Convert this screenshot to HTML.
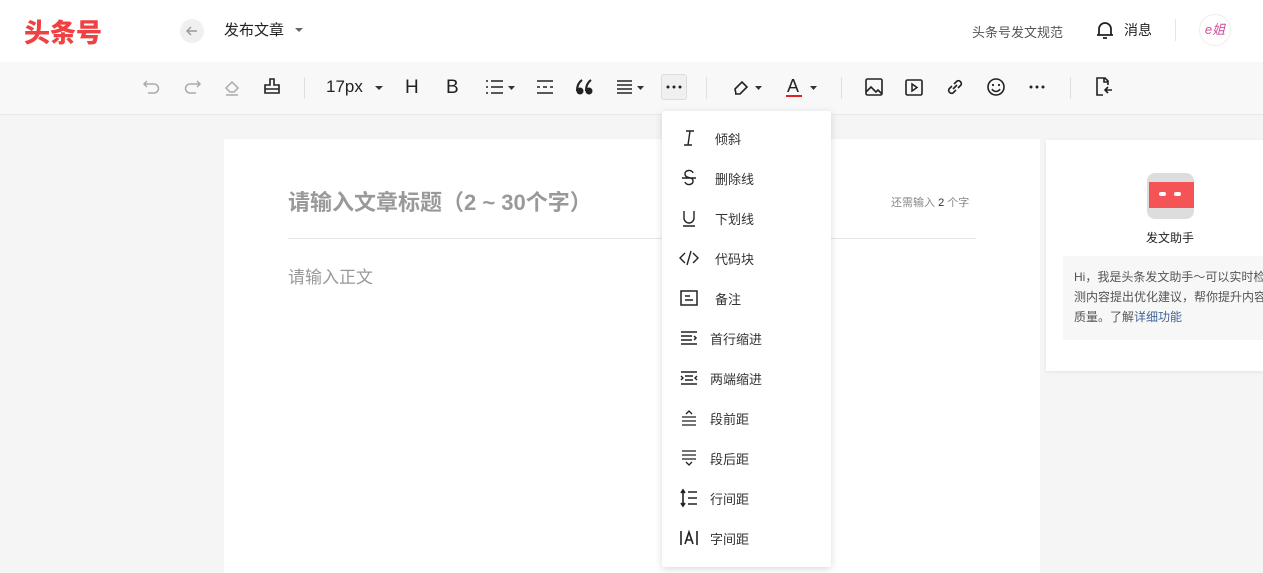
<!DOCTYPE html>
<html><head><meta charset="utf-8"><style>
*{margin:0;padding:0;box-sizing:border-box}
body{width:1263px;height:573px;overflow:hidden;background:#f5f5f5;font-family:"Liberation Sans","Noto Sans CJK SC",sans-serif;position:relative;color:#222}
.hdr{position:absolute;left:0;top:0;width:1263px;height:62px;background:#fff}
.logo{position:absolute;left:24px;top:13px;font-size:26px;font-weight:900;color:#f04142}
.back{position:absolute;left:180px;top:19px;width:24px;height:24px;border-radius:50%;background:#f0f0f0}
.t{position:absolute;font-size:15px}
.tb{position:absolute;left:0;top:62px;width:1263px;height:53px;background:#f8f8f8;border-bottom:1px solid #e8e8e8}
.ic{position:absolute;top:14px}
.sep{position:absolute;top:15px;width:1px;height:22px;background:#e0e0e0}
.paper{position:absolute;left:224px;top:139px;width:816px;height:434px;background:#fff}
.card{position:absolute;left:1046px;top:140px;width:217px;height:231px;background:#fff;box-shadow:0 1px 4px rgba(0,0,0,.08)}
.menu{position:absolute;left:662px;top:111px;width:169px;height:456px;background:#fff;box-shadow:0 2px 8px rgba(0,0,0,.15);border-radius:2px}
.mi{position:absolute;left:0;width:169px;height:40px;font-size:13px;color:#333}
.mi span{position:absolute;top:10px}
.mi svg{position:absolute;left:17px;top:9px}
</style></head><body>
<div class="hdr">
<div class="logo">头条号</div>
<div class="back"><svg width="24" height="24" viewBox="0 0 24 24"><path d="M17 12H7M11 8l-4 4 4 4" stroke="#999" stroke-width="1.4" fill="none"/></svg></div>
<div class="t" style="left:224px;top:19px;color:#222">发布文章</div>
<svg style="position:absolute;left:295px;top:27px" width="8" height="6"><path d="M0 1h8L4 5z" fill="#666"/></svg>
<div class="t" style="left:972px;top:22px;font-size:13px;color:#555">头条号发文规范</div>
<svg style="position:absolute;left:1094px;top:19px" width="22" height="22" viewBox="0 0 22 22"><path d="M5 16V10a6 6 0 0 1 12 0v6M3 16h16M9 19h4" stroke="#222" stroke-width="1.8" fill="none"/></svg>
<div class="t" style="left:1124px;top:20px;font-size:14px">消息</div>
<div style="position:absolute;left:1175px;top:19px;width:1px;height:22px;background:#e5e5e5"></div>
<div style="position:absolute;left:1199px;top:14px;width:32px;height:32px;border-radius:50%;border:1px solid #eee;background:#fff;color:#d04c9c;font-size:13px;text-align:center;line-height:30px;font-style:italic">e姐</div>
</div>
<div class="tb">
<svg class="ic" style="left:141px" width="22" height="22" viewBox="0 0 22 22"><path d="M6 5L3 8l3 3M3 8h10a4 4 0 0 1 0 9H7" stroke="#aaa" stroke-width="1.5" fill="none"/></svg>
<svg class="ic" style="left:181px" width="22" height="22" viewBox="0 0 22 22"><path d="M16 5l3 3-3 3M19 8H9a4 4 0 0 0 0 9h6" stroke="#aaa" stroke-width="1.5" fill="none"/></svg>
<svg class="ic" style="left:221px" width="22" height="22" viewBox="0 0 22 22"><path d="M5 12l6-6 6 6-4 4H9zM5 19h12" stroke="#aaa" stroke-width="1.5" fill="none"/></svg>
<svg class="ic" style="left:261px" width="22" height="22" viewBox="0 0 22 22"><path d="M9 3h4v6h5v8H4V9h5zM4 13h14" stroke="#222" stroke-width="1.6" fill="none"/></svg>
<div class="sep" style="left:304px"></div>
<div class="t" style="left:326px;top:15px;font-size:17px">17px</div>
<svg style="position:absolute;left:375px;top:23px" width="8" height="6"><path d="M0 1h8L4 5z" fill="#333"/></svg>
<div class="t" style="left:405px;top:15px;font-size:19px;font-weight:300">H</div>
<div class="t" style="left:446px;top:15px;font-size:19px">B</div>
<svg class="ic" style="left:484px" width="22" height="22" viewBox="0 0 22 22"><path d="M2 5h2M2 11h2M2 17h2M7 5h12M7 11h12M7 17h12" stroke="#222" stroke-width="1.6"/></svg>
<svg style="position:absolute;left:508px;top:23px" width="8" height="6"><path d="M0 1h7L3.5 5z" fill="#333"/></svg>
<svg class="ic" style="left:534px" width="22" height="22" viewBox="0 0 22 22"><path d="M3 5h16M3 17h16M3 11h3M9 11h4M16 11h3" stroke="#222" stroke-width="1.5"/></svg>
<svg class="ic" style="left:574px" width="22" height="22" viewBox="0 0 22 22"><circle cx="6" cy="15" r="3.5" fill="#222"/><circle cx="15" cy="15" r="3.5" fill="#222"/><path d="M3 15C3 10 5 6 8 4M12 15c0-5 2-9 5-11" stroke="#222" stroke-width="2.2" fill="none"/></svg>
<svg class="ic" style="left:614px" width="22" height="22" viewBox="0 0 22 22"><path d="M3 5h15M3 9h15M3 13h15M3 17h15" stroke="#222" stroke-width="1.5"/></svg>
<svg style="position:absolute;left:637px;top:23px" width="8" height="6"><path d="M0 1h7L3.5 5z" fill="#333"/></svg>
<div style="position:absolute;left:661px;top:12px;width:26px;height:26px;border:1px solid #ddd;border-radius:3px;background:#f0f0f0"><svg width="24" height="24"><circle cx="6" cy="12" r="1.5" fill="#222"/><circle cx="12" cy="12" r="1.5" fill="#222"/><circle cx="18" cy="12" r="1.5" fill="#222"/></svg></div>
<div class="sep" style="left:706px"></div>
<svg class="ic" style="left:731px" width="22" height="22" viewBox="0 0 22 22"><path d="M4 13l7-7 5 5-7 7H5zM4 18h5" stroke="#222" stroke-width="1.6" fill="none"/></svg>
<svg style="position:absolute;left:755px;top:23px" width="8" height="6"><path d="M0 1h7L3.5 5z" fill="#333"/></svg>
<div class="t" style="left:787px;top:14px;font-size:18px">A</div>
<div style="position:absolute;left:786px;top:33px;width:16px;height:2px;background:#d22"></div>
<svg style="position:absolute;left:810px;top:23px" width="8" height="6"><path d="M0 1h7L3.5 5z" fill="#333"/></svg>
<div class="sep" style="left:841px"></div>
<svg class="ic" style="left:863px" width="22" height="22" viewBox="0 0 22 22"><rect x="3" y="3" width="16" height="16" rx="1.5" stroke="#222" stroke-width="1.6" fill="none"/><path d="M3 16l5-5 5 5 2-2 4 4" stroke="#222" stroke-width="1.6" fill="none"/></svg>
<svg class="ic" style="left:903px" width="22" height="22" viewBox="0 0 22 22"><rect x="3" y="4" width="16" height="15" rx="1.5" stroke="#222" stroke-width="1.6" fill="none"/><path d="M9 8v7l5-3.5z" stroke="#222" stroke-width="1.5" fill="none"/></svg>
<svg class="ic" style="left:944px" width="22" height="22" viewBox="0 0 22 22"><path d="M9 13l4-4M8 10l-3 3a3 3 0 0 0 4 4l3-3M14 12l3-3a3 3 0 0 0-4-4l-3 3" stroke="#222" stroke-width="1.6" fill="none"/></svg>
<svg class="ic" style="left:985px" width="22" height="22" viewBox="0 0 22 22"><circle cx="11" cy="11" r="8" stroke="#222" stroke-width="1.6" fill="none"/><circle cx="8" cy="9" r="1.1" fill="#222"/><circle cx="14" cy="9" r="1.1" fill="#222"/><path d="M7 13a4.5 4.5 0 0 0 8 0" stroke="#222" stroke-width="1.5" fill="none"/></svg>
<svg class="ic" style="left:1027px" width="22" height="22"><circle cx="4" cy="11" r="1.5" fill="#222"/><circle cx="10" cy="11" r="1.5" fill="#222"/><circle cx="16" cy="11" r="1.5" fill="#222"/></svg>
<div class="sep" style="left:1070px"></div>
<svg class="ic" style="left:1093px" width="22" height="22" viewBox="0 0 22 22"><path d="M15 9V5l-3-3H4v17h6M11 2v4h4M12 14h7M15 11l-3 3 3 3" stroke="#222" stroke-width="1.6" fill="none"/></svg>
</div>
<div class="paper">
<div style="position:absolute;left:64px;top:46px;font-size:22px;font-weight:bold;color:#999">请输入文章标题（2 ~ 30个字）</div>
<div style="position:absolute;left:667px;top:55px;font-size:11px;color:#888">还需输入 <span style="color:#333">2</span> 个字</div>
<div style="position:absolute;left:64px;top:99px;width:688px;height:1px;background:#e6e6e6"></div>
<div style="position:absolute;left:64px;top:124px;font-size:17px;color:#999">请输入正文</div>
</div>
<div class="card">
<div style="position:absolute;left:101px;top:33px;width:47px;height:46px;border-radius:8px;background:#ddd"></div>
<div style="position:absolute;left:103px;top:42px;width:45px;height:26px;background:#f45455"></div>
<div style="position:absolute;left:113px;top:52px;width:7px;height:4px;border-radius:2px;background:#fff"></div>
<div style="position:absolute;left:128px;top:52px;width:7px;height:4px;border-radius:2px;background:#fff"></div>
<div style="position:absolute;left:100px;top:89px;font-size:12px">发文助手</div>
<div style="position:absolute;left:17px;top:116px;width:200px;height:84px;background:#f7f7f7"></div>
<div style="position:absolute;left:28px;top:127px;width:190px;font-size:12px;line-height:20px;color:#555;white-space:nowrap;overflow:hidden">Hi，我是头条发文助手～可以实时检<br>测内容提出优化建议，帮你提升内容<br>质量。了解<span style="color:#406599">详细功能</span></div>
</div>
<div class="menu">
<div class="mi" style="top:8px"><svg width="20" height="20" viewBox="0 0 20 20"><path d="M7 3h8M5 17h8M11 3L9 17" stroke="#222" stroke-width="1.4"/></svg><span style="left:53px">倾斜</span></div>
<div class="mi" style="top:48px"><svg width="20" height="20" viewBox="0 0 20 20"><path d="M14 5a4 3 0 0 0-8 1c0 5 8 2 8 7a4 3 0 0 1-8 1M3 10h14" stroke="#222" stroke-width="1.4" fill="none"/></svg><span style="left:53px">删除线</span></div>
<div class="mi" style="top:88px"><svg width="20" height="20" viewBox="0 0 20 20"><path d="M5 3v7a5 5 0 0 0 10 0V3M4 18h12" stroke="#222" stroke-width="1.4" fill="none"/></svg><span style="left:53px">下划线</span></div>
<div class="mi" style="top:128px"><svg width="20" height="20" viewBox="0 0 20 20"><path d="M6 5L1 10l5 5M14 5l5 5-5 5M12 3L8 17" stroke="#222" stroke-width="1.4" fill="none"/></svg><span style="left:53px">代码块</span></div>
<div class="mi" style="top:168px"><svg width="20" height="20" viewBox="0 0 20 20"><rect x="2" y="3" width="16" height="14" stroke="#222" stroke-width="1.5" fill="none"/><path d="M6 8h5M6 12h8" stroke="#222" stroke-width="1.4"/></svg><span style="left:53px">备注</span></div>
<div class="mi" style="top:208px"><svg width="20" height="20" viewBox="0 0 20 20"><path d="M2 4h16M2 8h11M2 12h11M2 16h16M15 8l2 2-2 2" stroke="#222" stroke-width="1.5" fill="none"/></svg><span style="left:48px">首行缩进</span></div>
<div class="mi" style="top:248px"><svg width="20" height="20" viewBox="0 0 20 20"><path d="M2 4h16M6 8h8M6 12h8M2 16h16M2 8l2 2-2 2M18 8l-2 2 2 2" stroke="#222" stroke-width="1.4" fill="none"/></svg><span style="left:48px">两端缩进</span></div>
<div class="mi" style="top:288px"><svg width="20" height="20" viewBox="0 0 20 20"><path d="M7 6l3-3 3 3M3 9h14M3 13h14M3 17h14" stroke="#222" stroke-width="1.3" fill="none"/></svg><span style="left:48px">段前距</span></div>
<div class="mi" style="top:328px"><svg width="20" height="20" viewBox="0 0 20 20"><path d="M3 3h14M3 7h14M3 11h14M7 14l3 3 3-3" stroke="#222" stroke-width="1.3" fill="none"/></svg><span style="left:48px">段后距</span></div>
<div class="mi" style="top:368px"><svg width="20" height="20" viewBox="0 0 20 20"><path d="M4 2v16M2 5l2-3 2 3M2 15l2 3 2-3M9 4h9M9 10h9M9 16h9" stroke="#222" stroke-width="1.6" fill="none"/></svg><span style="left:48px">行间距</span></div>
<div class="mi" style="top:408px"><svg width="20" height="20" viewBox="0 0 20 20"><path d="M2 3v14M18 3v14M6 16l4-12 4 12M7.5 12h5" stroke="#222" stroke-width="1.6" fill="none"/></svg><span style="left:48px">字间距</span></div>
</div>
</body></html>
